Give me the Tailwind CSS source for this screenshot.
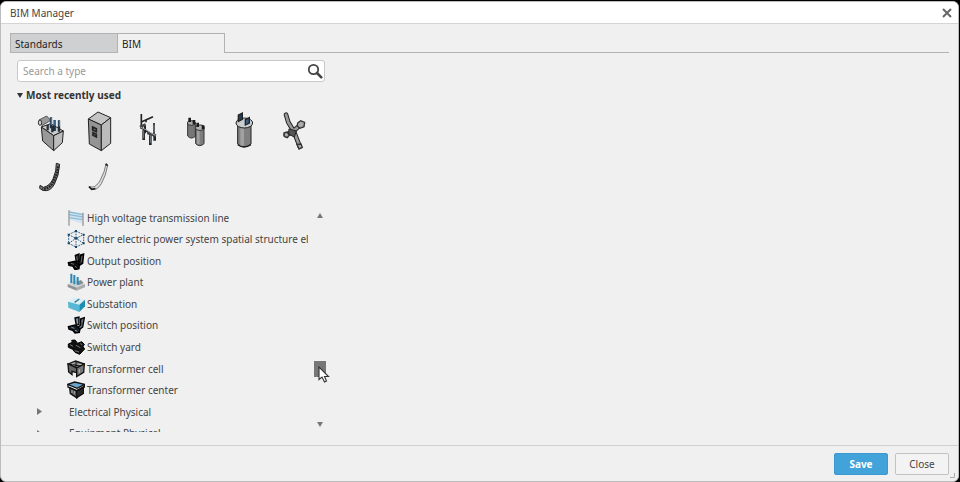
<!DOCTYPE html>
<html lang="en">

<head>
    <meta charset="UTF-8">
    <meta name="viewport" content="width=device-width, initial-scale=1.0">
    <title>BIM Manager</title>
    <script src="https://cdn.jsdelivr.net/npm/@tailwindcss/browser@4"></script>
</head>

<body class="bg-black font-['Noto_Sans',sans-serif] text-[10px] leading-4 text-[#444]">

    <div class="flex flex-col h-screen pt-px pr-px">
        <div role="dialog" aria-labelledby="title" class="relative flex flex-col flex-1 min-h-0 bg-[#f0f0f0] border border-[#bcbcbc] rounded-md overflow-hidden">

            <!-- Title bar -->
            <header class="flex items-center justify-between h-[22px] shrink-0 pl-[9px] pr-[6px] bg-white border-b border-[#d4d4d4]">
                <h1 id="title">BIM Manager</h1>
                <button aria-label="Close window" class="size-[10px]">
                    <svg viewBox="0 0 10 10" class="size-[10px]" fill="none" stroke="#666" stroke-width="2">
                        <path d="M1 1L9 9M9 1L1 9" />
                    </svg>
                </button>
            </header>

            <main class="flex flex-col flex-1 min-h-0 pt-[9px] px-[9px]">
                <!-- Tabs -->
                <div role="tablist" class="flex h-5 shrink-0 text-[#222]">
                    <button role="tab" aria-selected="false" class="w-[107px] pl-1 pt-px text-left bg-[#cfd0d1] border border-r-0 border-[#b2b2b2]">Standards</button>
                    <button role="tab" aria-selected="true" class="w-[108px] pl-1 text-left border border-b-0 border-[#b2b2b2]">BIM</button>
                    <div class="flex-1 border-b border-[#b2b2b2]"></div>
                </div>

                <section class="w-[324px] pl-[7px] pt-[7px]">
                    <!-- Search -->
                    <div class="flex items-center w-[308px] h-[22px] bg-white border border-[#c8c8c8] rounded-[3px]">
                        <input type="text" aria-label="Search a type" placeholder="Search a type" class="flex-1 min-w-0 pl-[5px] outline-none placeholder:text-[#999]">
                        <button aria-label="Search" class="size-4 mr-px">
                            <svg viewBox="0 0 16 16" class="size-4" fill="none" stroke="#444">
                                <circle cx="6.5" cy="6.5" r="4.7" stroke-width="1.8" />
                                <path d="M10 10L14.3 14.3" stroke-width="2.6" stroke-linecap="round" />
                            </svg>
                        </button>
                    </div>

                    <!-- Recent types -->
                    <button class="flex items-center gap-[3px] mt-[5px] h-4 font-bold text-[#333]" aria-expanded="true">
                        <svg viewBox="0 0 6 5" class="w-[6px] h-[5px]" fill="#333"><path d="M0 0H6L3 5Z" /></svg>
                        Most recently used
                    </button>

                    <div class="grid grid-cols-6 w-[288px] ml-[10px] mt-1">
                        <button aria-label="Switchgear block" class="h-12">
                            <svg viewBox="-9 6 144 144" class="size-12" stroke="#222" stroke-width="3">
                                <path d="M34 66L62 56L100 78L71 92Z" fill="#ccc" />
                                <path d="M34 66L71 92V137L38 108Z" fill="#999" />
                                <path d="M71 92L100 78L97 113L71 137Z" fill="#bdbdbd" />
                                <path d="M27 45L50 33L62 46L36 62Z" fill="#999" stroke="#555" />
                                <ellipse cx="30" cy="53" rx="5" ry="8" fill="#ccc" stroke="#333" />
                                <g stroke-width="7" stroke="#20303f">
                                    <path d="M63 37V70M74 45V78M87 46V80M53 60V76M67 62V82" />
                                    <path d="M64 38V60M75 46V62M88 47V64" stroke="#3f7fb5" stroke-width="4" />
                                </g>
                            </svg>
                        </button>
                        <button aria-label="Cabinet" class="h-12">
                            <svg viewBox="135 6 144 144" class="size-12" stroke="#222" stroke-width="3">
                                <path d="M175 42L204 21L242 38L214 60Z" fill="#c4c4c4" />
                                <path d="M175 42L214 60V137L178 117Z" fill="#949494" />
                                <path d="M214 60L242 38V115L214 137Z" fill="#bbb" />
                                <path d="M188 66L199 71V80L188 75ZM189 83L199 88V96L189 91Z" fill="#777" stroke-width="5" />
                            </svg>
                        </button>
                        <button aria-label="Disconnector" class="h-12">
                            <svg viewBox="279 6 144 144" class="size-12" fill="none" stroke="#222" stroke-width="5">
                                <path d="M334 27V72M372 54V88M334 51L369 35M348 44V52" />
                                <path d="M345 62V85M334 68L373 93" stroke-width="6" />
                                <path d="M341 76V105M361 91V120M374 89V107" stroke-width="8" />
                                <path d="M341 78V100M361 92V114M372 60V82" stroke="#71818b" stroke-width="3" />
                                <path d="M330 66L347 58M352 84L378 92" stroke="#444" stroke-width="8" />
                                <path d="M332 67L347 74L376 91" stroke="#aab4bc" stroke-width="3" />
                            </svg>
                        </button>
                        <button aria-label="Twin tank" class="h-12">
                            <svg viewBox="-12 6 144 144" class="size-12" stroke="#333" stroke-width="3">
                                <path d="M38 53V93Q48 105 61 94V54Z" fill="#777" />
                                <ellipse cx="49" cy="54" rx="12" ry="7" fill="#aaa" />
                                <path d="M62 68V116Q74 128 87 116V68Z" fill="#7d7d7d" />
                                <path d="M66 74V117H74V74Z" fill="#a0a0a0" stroke="none" />
                                <ellipse cx="75" cy="68" rx="13" ry="8" fill="#b7b7b7" />
                                <path d="M44 38V51M57 45V58M68 53V66M84 61V73" stroke="#1c1c1c" stroke-width="8" />
                            </svg>
                        </button>
                        <button aria-label="Tank" class="h-12">
                            <svg viewBox="132 6 144 144" class="size-12" stroke="#222" stroke-width="3">
                                <path d="M188 60V117Q206 134 228 117V60Z" fill="#808080" />
                                <path d="M196 69V122H207V69Z" fill="#a1a1a1" stroke="none" />
                                <ellipse cx="208" cy="54" rx="25" ry="15" fill="#c8cdd0" />
                                <path d="M188 119Q207 133 228 119" fill="none" stroke-width="4" />
                                <path d="M190 30L202 24V43L190 49Z" fill="#25405c" stroke-width="4" />
                                <path d="M211 44L223 38V54L211 60Z" fill="#376086" stroke-width="4" />
                            </svg>
                        </button>
                        <button aria-label="Cross joint" class="h-12">
                            <svg viewBox="276 6 144 144" class="size-12" stroke-linecap="round">
                                <path d="M333 29L340 52L357 80L374 124M332 90L352 81L380 56" stroke="#222" stroke-width="14" fill="none" />
                                <path d="M333 29L340 52L357 80L374 124M332 90L352 81L380 56" stroke="#999" stroke-width="8" fill="none" />
                                <path d="M368 54L377 47L389 52L387 65L375 70L367 63ZM327 84L336 81L343 90L337 98L328 94ZM366 118L378 117L382 127L372 132Z" fill="#aaa" stroke="#333" stroke-width="4" />
                                <path d="M343 72L364 78L358 96L342 88Z" fill="#555" stroke="#222" stroke-width="3" />
                            </svg>
                        </button>
                        <button aria-label="Cable tray bend" class="h-12">
                            <svg viewBox="-9 0 144 144" class="size-12">
                                <path d="M79 25L89 28Q87 62 73 88Q60 112 38 106L29 100L30 91L40 97Q58 94 69 72Q80 47 79 25Z" fill="#777" stroke="#222" stroke-width="3" />
                                <path d="M84 34Q81 64 66 87Q56 101 37 102" fill="none" stroke="#222" stroke-width="7" stroke-dasharray="5 3" />
                            </svg>
                        </button>
                        <button aria-label="Duct bend" class="h-12">
                            <svg viewBox="135 0 144 144" class="size-12">
                                <path d="M228 26L233 31Q228 62 214 86Q202 107 184 103L177 95L187 96Q200 96 212 73Q225 49 228 26Z" fill="#ddd" stroke="#444" stroke-width="2" />
                                <path d="M227 27L233 32M177 95L185 103L196 101" fill="none" stroke="#222" stroke-width="5" />
                            </svg>
                        </button>
                    </div>

                    <!-- Type tree -->
                    <div class="flex justify-between h-[225px] mt-1 overflow-hidden">
                        <ul role="tree" class="grid grid-rows-11 h-[237px] w-[291px] pl-[19px] overflow-hidden whitespace-nowrap *:flex *:items-center">
                            <li role="treeitem" class="pl-[31px] gap-[2px]">
                                <svg viewBox="21 11 54 54" class="size-[18px] shrink-0" fill="none">
                                    <path d="M27 17L68 24V55L27 43Z" fill="#d5e5ef" />
                                    <path d="M27 20L69 28M27 28L69 35M28 37L68 43" stroke="#8abbd8" stroke-width="4" />
                                    <path d="M27 15V61M69 22V62" stroke="#999" stroke-width="4" />
                                </svg>
                                <span>High voltage transmission line</span>
                            </li>
                            <li role="treeitem" class="pl-[31px] gap-[2px]">
                                <svg viewBox="21 76 54 54" class="size-[18px] shrink-0" fill="none" stroke="#285d82" stroke-width="3">
                                    <path d="M48 79L71 90V116L48 127L26 116V90ZM26 90L48 101L71 90M48 101V127M26 116L48 101L71 116M48 79V101" stroke-dasharray="5 3" />
                                    <path d="M45 79H51M23 90H29M68 90H74M23 116H29M68 116H74M45 127H51M43 101H53" stroke="#164564" stroke-width="6" />
                                </svg>
                                <span>Other electric power system spatial structure el</span>
                            </li>
                            <li role="treeitem" class="pl-[31px] gap-[2px]">
                                <svg viewBox="21 141 54 54" class="size-[18px] shrink-0" stroke="#000" stroke-width="4">
                                    <path d="M46 151L57 147L58 167L49 171ZM62 150L71 147L68 175L57 182L55 173L62 168Z" fill="#222" />
                                    <path d="M25 173L45 169L58 179L57 191L45 194L38 183L27 181Z" fill="#111" />
                                    <path d="M50 154L52 166M66 154L63 171M33 175L42 178M45 183L50 188" stroke="#999" stroke-width="2" />
                                </svg>
                                <span>Output position</span>
                            </li>
                            <li role="treeitem" class="pl-[31px] gap-[2px]">
                                <svg viewBox="21 205 54 54" class="size-[18px] shrink-0">
                                    <path d="M23 239L47 227L77 240L50 253Z" fill="#d0d2d4" />
                                    <path d="M23 239L50 249V258L23 247Z" fill="#8d9296" />
                                    <path d="M50 249L77 237V247L50 258Z" fill="#a8acaf" />
                                    <path d="M51 231L63 226L71 235L56 242Z" fill="#858d92" />
                                    <path d="M34 207V235M43 211V239M53 217V240" stroke="#2b88b3" stroke-width="6" />
                                </svg>
                                <span>Power plant</span>
                            </li>
                            <li role="treeitem" class="pl-[31px] gap-[2px]">
                                <svg viewBox="21 0 54 54" class="size-[18px] shrink-0">
                                    <path d="M24 20L41 7L75 14L58 29Z" fill="#d8eff6" />
                                    <path d="M24 20L58 29V51L25 38Z" fill="#58b7d4" />
                                    <path d="M58 29L75 14V34L58 51Z" fill="#208cb0" />
                                    <path d="M44 22L58 12" stroke="#3a7890" stroke-width="4" />
                                </svg>
                                <span>Substation</span>
                            </li>
                            <li role="treeitem" class="pl-[31px] gap-[2px]">
                                <svg viewBox="21 64 54 54" class="size-[18px] shrink-0" stroke="#000" stroke-width="4">
                                    <path d="M45 70L57 67V89L49 92ZM62 73L73 69L68 97L57 105L55 97L62 91Z" fill="#667581" />
                                    <path d="M25 96L45 91L60 102L58 113L45 115L38 107L27 104Z" fill="#151b20" />
                                    <path d="M51 73L53 86M34 98L43 101M45 107L52 110" stroke="#82a5bd" stroke-width="3" />
                                </svg>
                                <span>Switch position</span>
                            </li>
                            <li role="treeitem" class="pl-[31px] gap-[2px]">
                                <svg viewBox="21 129 54 54" class="size-[18px] shrink-0" stroke="#000" stroke-width="3">
                                    <path d="M25 147L37 142L35 136L45 135L53 145L65 140L73 148L69 155L74 162L59 178L45 172L38 163L25 157Z" fill="#111" />
                                    <path d="M30 149L39 154M48 151L61 158M44 167L57 171M61 146L67 149" stroke="#777" stroke-width="3" />
                                </svg>
                                <span>Switch yard</span>
                            </li>
                            <li role="treeitem" class="pl-[31px] gap-[2px]">
                                <svg viewBox="21 194 54 54" class="size-[18px] shrink-0" stroke="#111" stroke-width="4">
                                    <path d="M24 206L47 197L73 206L50 218Z" fill="#888" />
                                    <path d="M24 206L50 218V232L36 228V238L26 230Z" fill="#666" />
                                    <path d="M50 218L73 206L71 231L50 244Z" fill="#777" />
                                    <path d="M48 197V219M31 207L62 212" fill="none" stroke-width="3" />
                                    <path d="M36 206L44 203M55 208L64 207M58 222V232" stroke="#bbb" stroke-width="3" />
                                </svg>
                                <span>Transformer cell</span>
                            </li>
                            <li role="treeitem" class="pl-[31px] gap-[2px]">
                                <svg viewBox="21 258 54 54" class="size-[18px] shrink-0" stroke="#111" stroke-width="4">
                                    <path d="M29 278L50 287V308L31 296Z" fill="#555" />
                                    <path d="M50 287L70 276V295L50 308Z" fill="#292929" />
                                    <path d="M23 268L44 261L74 268L51 280Z" fill="#6ba5cc" />
                                    <path d="M36 285V294M43 288V298" stroke="#aaa" stroke-width="3" />
                                    <path d="M24 269V276L51 288L73 276V269" fill="none" />
                                </svg>
                                <span>Transformer center</span>
                            </li>
                            <li role="treeitem" aria-expanded="false" class="gap-[27px] pl-px">
                                <svg viewBox="0 0 5 7" class="w-[5px] h-[7px]" fill="#777"><path d="M0 0L5 3.5L0 7Z" /></svg>
                                <span>Electrical Physical</span>
                            </li>
                            <li role="treeitem" aria-expanded="false" class="gap-[27px] pl-px">
                                <svg viewBox="0 0 5 7" class="w-[5px] h-[7px]" fill="#777"><path d="M0 0L5 3.5L0 7Z" /></svg>
                                <span>Equipment Physical</span>
                            </li>
                        </ul>

                        <!-- Scrollbar -->
                        <div class="flex flex-col items-center w-3 mr-2 pt-[6px] pb-[5px]">
                            <svg viewBox="0 0 6 5" class="w-[6px] h-[5px]" fill="#777"><path d="M0 5L3 0L6 5Z" /></svg>
                            <div class="relative w-3 h-4 mt-[143px] mb-auto bg-[#777]">
                                <svg viewBox="0 0 12 18" class="absolute left-1 top-[5px] w-3 h-[18px]" fill="#fff" stroke="#333" stroke-width="1.1">
                                    <path d="M1 1V13.5L4 11L6.5 16L8.5 15L6.5 10.5H10.5Z" />
                                </svg>
                            </div>
                            <svg viewBox="0 0 6 5" class="w-[6px] h-[5px]" fill="#777"><path d="M0 0H6L3 5Z" /></svg>
                        </div>
                    </div>
                </section>
            </main>

            <!-- Actions -->
            <footer class="flex justify-end gap-[7px] h-9 shrink-0 pt-[7px] pr-[9px] border-t border-[#d0d0d0]">
                <button class="w-[54px] h-[22px] rounded-[2px] bg-[#42a2da] border border-[#3c99d0] font-bold text-white">Save</button>
                <button class="w-[54px] h-[22px] rounded-[2px] border border-[#c2c2c2] bg-[#f3f3f3]">Close</button>
            </footer>
            <svg viewBox="0 0 5 5" class="absolute right-[3px] bottom-[3px] size-[5px]" fill="none" stroke="#aaa"><path d="M4.5 0V4.5H0" /></svg>
        </div>
    </div>

</body>

</html>
